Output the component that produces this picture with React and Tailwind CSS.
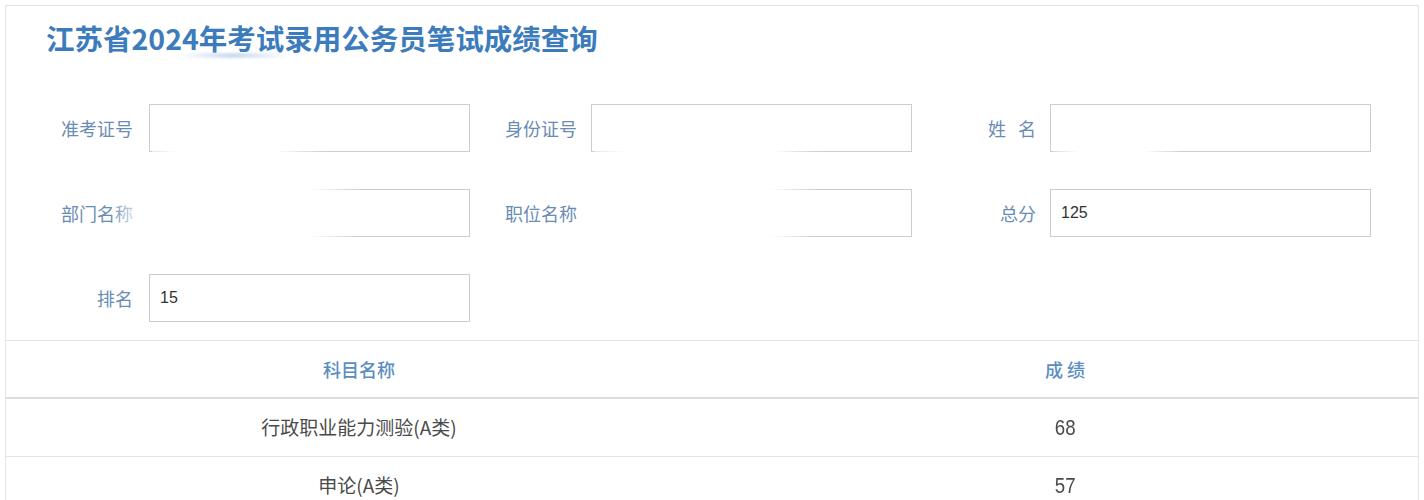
const FONT = { fontFamily: '"Noto Sans CJK SC", "Liberation Sans", sans-serif' }
const LATIN = { fontFamily: '"Liberation Sans", "Noto Sans CJK SC", sans-serif' }

const Field = ({ label, value, labelClass }) => (
  <div className="flex items-center">
    <div className={`${labelClass} shrink-0 text-right text-[18px] text-[#6a8cb3]`}>{label}</div>
    <input
      type="text"
      readOnly
      value={value || ''}
      className="w-[321px] h-[48px] border border-[#cdcdcd] bg-white px-[10px] text-[16px] text-[#333] outline-none"
      style={LATIN}
    />
  </div>
)

// white smudges that cover the personal data in the original screenshot
const Smudge = ({ className }) => (
  <div className={`absolute pointer-events-none ${className}`} />
)

export default function App() {
  return (
    <div className="bg-white w-[1424px] h-[500px] overflow-hidden" style={FONT}>
      <div className="relative mx-[5px] mt-[5px] border border-[#e3e3e3] bg-white">
        <div className="relative pl-[40px] pt-[14px]">
          <h1 className="text-[28.5px] leading-[36px] font-bold text-[#3c7cbd]">江苏省2024年考试录用公务员笔试成绩查询</h1>
          <div className="absolute left-[172px] top-[47px] h-[5px] w-[112px] rounded-full bg-gradient-to-r from-transparent via-[#c9dcef] to-transparent blur-[1px]" />
        </div>

        <div className="mt-[48px] grid grid-cols-[464px_443px_459px] gap-y-[37px]">
          <Field label="准考证号" labelClass="w-[127px] mr-[16px]" />
          <Field label="身份证号" labelClass="w-[107px] mr-[14px]" />
          <Field label={'姓\u00a0\u00a0\u00a0名'} labelClass="w-[123px] mr-[14px]" />
          <Field label="部门名称" labelClass="w-[127px] mr-[16px]" />
          <Field label="职位名称" labelClass="w-[107px] mr-[14px]" />
          <Field label="总分" value="125" labelClass="w-[123px] mr-[14px]" />
          <Field label="排名" value="15" labelClass="w-[127px] mr-[16px]" />
        </div>

        <Smudge className="left-[146px] top-[99px] w-[175px] h-[56px] bg-[linear-gradient(to_right,rgba(255,255,255,0.5),white_15%,white_70%,transparent)]" />
        <Smudge className="left-[588px] top-[99px] w-[225px] h-[56px] bg-[linear-gradient(to_right,rgba(255,255,255,0.5),white_15%,white_80%,transparent)]" />
        <Smudge className="left-[1047px] top-[99px] w-[130px] h-[56px] bg-[linear-gradient(to_right,rgba(255,255,255,0.3),white_20%,white_70%,transparent)]" />
        <Smudge className="left-[104px] top-[180px] w-[250px] h-[60px] bg-[linear-gradient(to_right,transparent,white_14%,white_80%,transparent)]" />
        <Smudge className="left-[578px] top-[180px] w-[232px] h-[60px] bg-[linear-gradient(to_right,white,white_80%,transparent)]" />

        <div className="mt-[18px] border-t border-[#e2e2e2]">
          <div className="grid grid-cols-2 h-[58px] items-center border-b-2 border-[#dcdcdc] text-center text-[18px] font-medium text-[#5a8ec2]">
            <div>科目名称</div>
            <div>成 绩</div>
          </div>
          {[
            ['行政职业能力测验(A类)', '68'],
            ['申论(A类)', '57'],
          ].map(([name, score]) => (
            <div key={name} className="grid grid-cols-2 h-[58px] items-center border-b border-[#e3e3e3] text-center text-[19px] text-[#4a4a4a]">
              <div>{name}</div>
              <div>
                <span className="inline-block scale-x-[0.85] text-[22px]" style={LATIN}>{score}</span>
              </div>
            </div>
          ))}
        </div>
      </div>
    </div>
  )
}
